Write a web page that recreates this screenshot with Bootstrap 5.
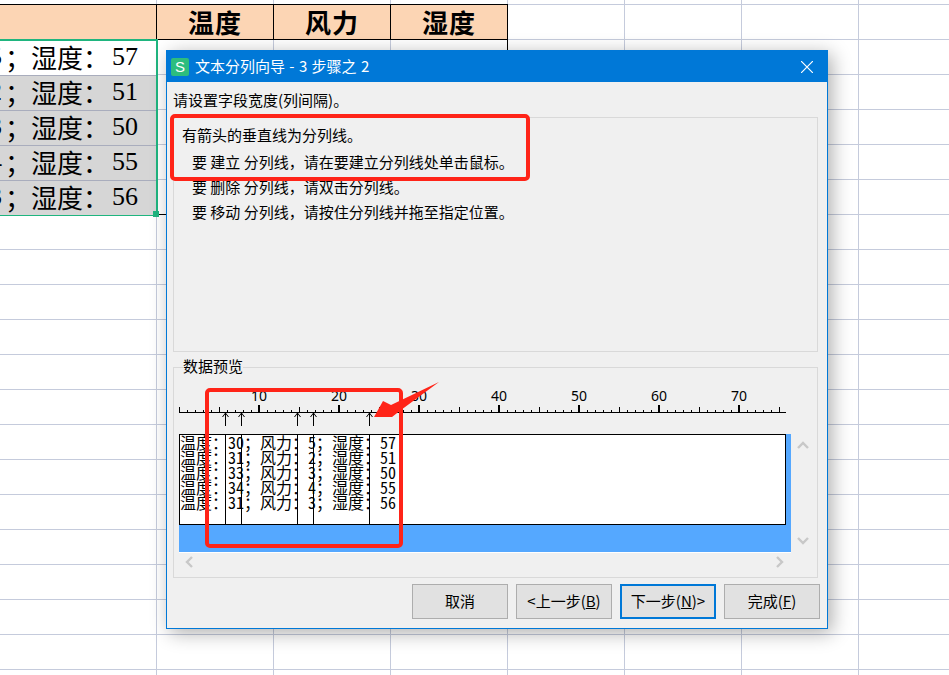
<!DOCTYPE html>
<html lang="zh-CN">
  <head>
    <meta charset="UTF-8" />
    <title>文本分列向导</title>
    <link rel="stylesheet" href="https://cdn.jsdelivr.net/npm/bootstrap@5.3.5/dist/css/bootstrap.min.css" />
    <style>
      body {
        overflow: hidden;
        font-family: "Noto Sans CJK SC", "Liberation Sans", sans-serif;
        color: #000;
      }
      .sheet {
        position: relative;
        width: 949px;
        height: 675px;
        overflow: hidden;
        padding-top: 4px;
        background-color: #fff;
        background-image: linear-gradient(#c5cbdc 1px, transparent 1px),
          linear-gradient(90deg, #fff 156px, transparent 156px),
          linear-gradient(90deg, #c5cbdc 1px, transparent 1px);
        background-size: 100% 35px, 100% 100%, 117px 100%;
        background-position: 0 4px, 0 0, 39px 0;
      }
      .head-row {
        width: 508px;
        height: 36px;
        background: #fcd5b4;
        border-top: 1px solid #000;
        border-bottom: 1px solid #000;
      }
      .head-cell {
        width: 117px;
        border-right: 1px solid #000;
        font-size: 26px;
        font-weight: 700;
        letter-spacing: 1px;
        line-height: 34px;
        text-align: center;
      }
      .head-cell.first {
        width: 157px;
      }
      .body-row {
        width: 508px;
        margin-top: -1px;
      }
      .sel-box {
        position: relative;
        width: 158px;
        height: 177px;
        border: 2px solid #1fb57f;
        border-left: 0;
        background: #fff;
      }
      .sel-row {
        height: 35px;
        padding-right: 18px;
        overflow: hidden;
        background: #d6d6d6;
        border-top: 1px solid #a9adbd;
        font-size: 26px;
        line-height: 31px;
        white-space: nowrap;
      }
      .sel-row:first-child {
        height: 34px;
        background: #fff;
        border-top: 0;
      }
      .sel-num {
        margin-right: 3px;
        font-family: "Liberation Serif", serif;
      }
      .sel-num.val {
        margin-left: 3px;
        margin-right: 0;
      }
      .sel-handle {
        position: absolute;
        right: -3px;
        bottom: -3px;
        width: 6px;
        height: 6px;
        background: #1fb57f;
      }
      .rest-cols {
        width: 350px;
        height: 176px;
        border-right: 1px solid #000;
        border-bottom: 1px solid #000;
      }
      .wizard {
        position: absolute;
        left: 166px;
        top: 50px;
        width: 662px;
        height: 579px;
        background: #f0f0f0;
        border: 1px solid #0078d7;
        box-shadow: 4px 4px 18px rgba(0, 0, 0, 0.32);
        font-size: 15px;
      }
      .title-bar {
        height: 31px;
        padding: 0 6px 0 4px;
        background: #0078d7;
        color: #fff;
        font-size: 15px;
        word-spacing: 1px;
      }
      .app-icon {
        width: 18px;
        height: 18px;
        margin-right: 6px;
        border-radius: 2px;
        background: #2dbd7e;
        font: 400 15px/18px "Liberation Sans", sans-serif;
        text-align: center;
      }
      .hint-label {
        padding: 8px 0 0 6px;
        margin-bottom: 7px;
        line-height: 20px;
      }
      .group-box {
        position: relative;
        width: 645px;
        margin-left: 6px;
        border: 1px solid #d9d9d9;
      }
      .hints {
        height: 235px;
        margin-bottom: 15px;
        padding: 4px 0 0 8px;
        line-height: 25px;
      }
      .hints p {
        margin: 0 0 0 10px;
      }
      .hints p.intro {
        margin: 0 0 2px;
      }
      .preview-group {
        height: 211px;
        margin-bottom: 6px;
        padding: 17px 0 0 5px;
      }
      .group-title {
        position: absolute;
        left: 9px;
        top: -12px;
        line-height: 20px;
        background: #f0f0f0;
      }
      .ruler {
        display: block;
        margin-bottom: 7px;
      }
      .ruler text {
        font: 14px "Noto Sans", sans-serif;
        text-anchor: middle;
      }
      .preview-fill {
        width: 612px;
        height: 118px;
        background: #55a8ff;
        box-shadow: 0 1px 0 #fff;
      }
      .preview-text {
        position: relative;
        width: 607px;
        height: 91px;
        overflow: hidden;
        background: #fff;
        border: 1px solid #000;
        font-size: 16px;
        line-height: 15px;
        font-feature-settings: "hwid";
        white-space: nowrap;
      }
      .split-line {
        position: absolute;
        top: 0;
        bottom: 0;
        width: 1px;
        background: #000;
      }
      .v-scroll {
        width: 24px;
        height: 118px;
        padding: 7px 0;
      }
      .h-scroll {
        width: 612px;
        height: 20px;
        padding: 0 7px 0 6px;
      }
      .chev {
        fill: none;
        stroke: #c8c8c8;
        stroke-width: 2.4;
      }
      .wiz-btn {
        width: 96px;
        height: 35px;
        padding: 0;
        background: #e1e1e1;
        border: 1px solid #adadad;
        border-radius: 0;
        color: #000;
        font-size: 15px;
      }
      .wiz-btn.current {
        border: 2px solid #0078d7;
      }
      .dlg-buttons {
        padding-right: 7px;
      }
      .red-frame {
        position: absolute;
        border: 4px solid #ff2418;
        border-radius: 5px;
      }
      .frame-hint {
        left: 170px;
        top: 114px;
        width: 360px;
        height: 67px;
      }
      .frame-preview {
        left: 205px;
        top: 388px;
        width: 198px;
        height: 160px;
      }
      .red-arrow {
        position: absolute;
        left: 370px;
        top: 380px;
      }
    </style>
  </head>
  <body>
    <div class="sheet">
      <div class="head-row d-flex">
        <div class="head-cell first"></div>
        <div class="head-cell">温度</div>
        <div class="head-cell">风力</div>
        <div class="head-cell">湿度</div>
      </div>
      <div class="body-row d-flex">
        <div class="sel-box">
          <div class="sel-row d-flex justify-content-end">风力：<span class="sel-num">5</span>；湿度：<span class="sel-num val">57</span></div>
          <div class="sel-row d-flex justify-content-end">风力：<span class="sel-num">2</span>；湿度：<span class="sel-num val">51</span></div>
          <div class="sel-row d-flex justify-content-end">风力：<span class="sel-num">3</span>；湿度：<span class="sel-num val">50</span></div>
          <div class="sel-row d-flex justify-content-end">风力：<span class="sel-num">4</span>；湿度：<span class="sel-num val">55</span></div>
          <div class="sel-row d-flex justify-content-end">风力：<span class="sel-num">3</span>；湿度：<span class="sel-num val">56</span></div>
          <div class="sel-handle"></div>
        </div>
        <div class="rest-cols"></div>
      </div>

      <div class="wizard">
        <div class="title-bar d-flex align-items-center">
          <div class="app-icon">S</div>
          <div class="flex-grow-1">文本分列向导 - 3 步骤之 2</div>
          <svg width="12" height="12" viewBox="0 0 12 12" class="me-2">
            <path d="M0 0L12 12M12 0L0 12" stroke="#fff" stroke-width="1.2" fill="none" />
          </svg>
        </div>
        <div class="hint-label">请设置字段宽度(列间隔)。</div>
        <div class="group-box hints">
          <p class="intro">有箭头的垂直线为分列线。</p>
          <p>要 建立 分列线，请在要建立分列线处单击鼠标。</p>
          <p>要 删除 分列线，请双击分列线。</p>
          <p>要 移动 分列线，请按住分列线并拖至指定位置。</p>
        </div>
        <div class="group-box preview-group">
          <div class="group-title">数据预览</div>
          <svg id="ruler" class="ruler" width="612" height="42"></svg>
          <div class="d-flex">
            <div class="preview-fill">
              <div id="previewText" class="preview-text">
                <div>温度：30；风力：5；湿度：57</div>
                <div>温度：31；风力：2；湿度：51</div>
                <div>温度：33；风力：3；湿度：50</div>
                <div>温度：34；风力：4；湿度：55</div>
                <div>温度：31；风力：3；湿度：56</div>
              </div>
            </div>
            <div class="v-scroll d-flex flex-column justify-content-between align-items-center">
              <svg class="chev" width="12" height="8" viewBox="0 0 12 8"><path d="M1 7L6 2L11 7" /></svg>
              <svg class="chev" width="12" height="8" viewBox="0 0 12 8"><path d="M1 1L6 6L11 1" /></svg>
            </div>
          </div>
          <div class="h-scroll d-flex justify-content-between align-items-center">
            <svg class="chev" width="8" height="12" viewBox="0 0 8 12"><path d="M7 1L2 6L7 11" /></svg>
            <svg class="chev" width="8" height="12" viewBox="0 0 8 12"><path d="M1 1L6 6L1 11" /></svg>
          </div>
        </div>
        <div class="dlg-buttons d-flex justify-content-end gap-2">
          <button class="btn wiz-btn">取消</button>
          <button class="btn wiz-btn">&lt;上一步(<u>B</u>)</button>
          <button class="btn wiz-btn current">下一步(<u>N</u>)&gt;</button>
          <button class="btn wiz-btn">完成(<u>F</u>)</button>
        </div>
      </div>

      <div class="red-frame frame-hint"></div>
      <div class="red-frame frame-preview"></div>
      <svg class="red-arrow" width="72" height="40" viewBox="370 380 72 40">
        <path d="M374 417L383 401L391 405L439 382L401 410L392 417Z" fill="#ff2418" />
      </svg>
    </div>

    <script>
      // ruler: 8px per character, split points in characters
      const breaks = [6, 8, 15, 17, 24];
      const ruler = document.getElementById("ruler");
      const previewText = document.getElementById("previewText");

      let ticks = "M0 27.5H607";
      let bold = "";
      let labels = "";
      for (let n = 0; n <= 75; n++) {
        const x = n * 8;
        if (n % 10 === 0 && n > 0) {
          bold += `M${x} 20V27`;
          labels += `<text x="${x}" y="16">${n}</text>`;
        } else if (n % 5 === 0) {
          ticks += `M${x + 0.5} 22V27`;
        } else {
          ticks += `M${x + 0.5} 25V27`;
        }
      }
      let arrows = "";
      for (let i = 0; i < breaks.length; i++) {
        const x = breaks[i] * 8 - 2 + 0.5;
        arrows += `M${x} 28V41M${x - 3} 32L${x} 28L${x + 3} 32`;

        const line = document.createElement("div");
        line.className = "split-line";
        line.style.left = breaks[i] * 8 - 3 + "px";
        previewText.appendChild(line);
      }
      ruler.innerHTML =
        `<path d="${ticks}" stroke="#000" fill="none" />` +
        `<path d="${bold}" stroke="#000" stroke-width="2" fill="none" />` +
        `<path d="${arrows}" stroke="#000" fill="none" />` +
        labels;
    </script>
    <script src="https://cdn.jsdelivr.net/npm/bootstrap@5.3.5/dist/js/bootstrap.bundle.min.js"></script>
  </body>
</html>
